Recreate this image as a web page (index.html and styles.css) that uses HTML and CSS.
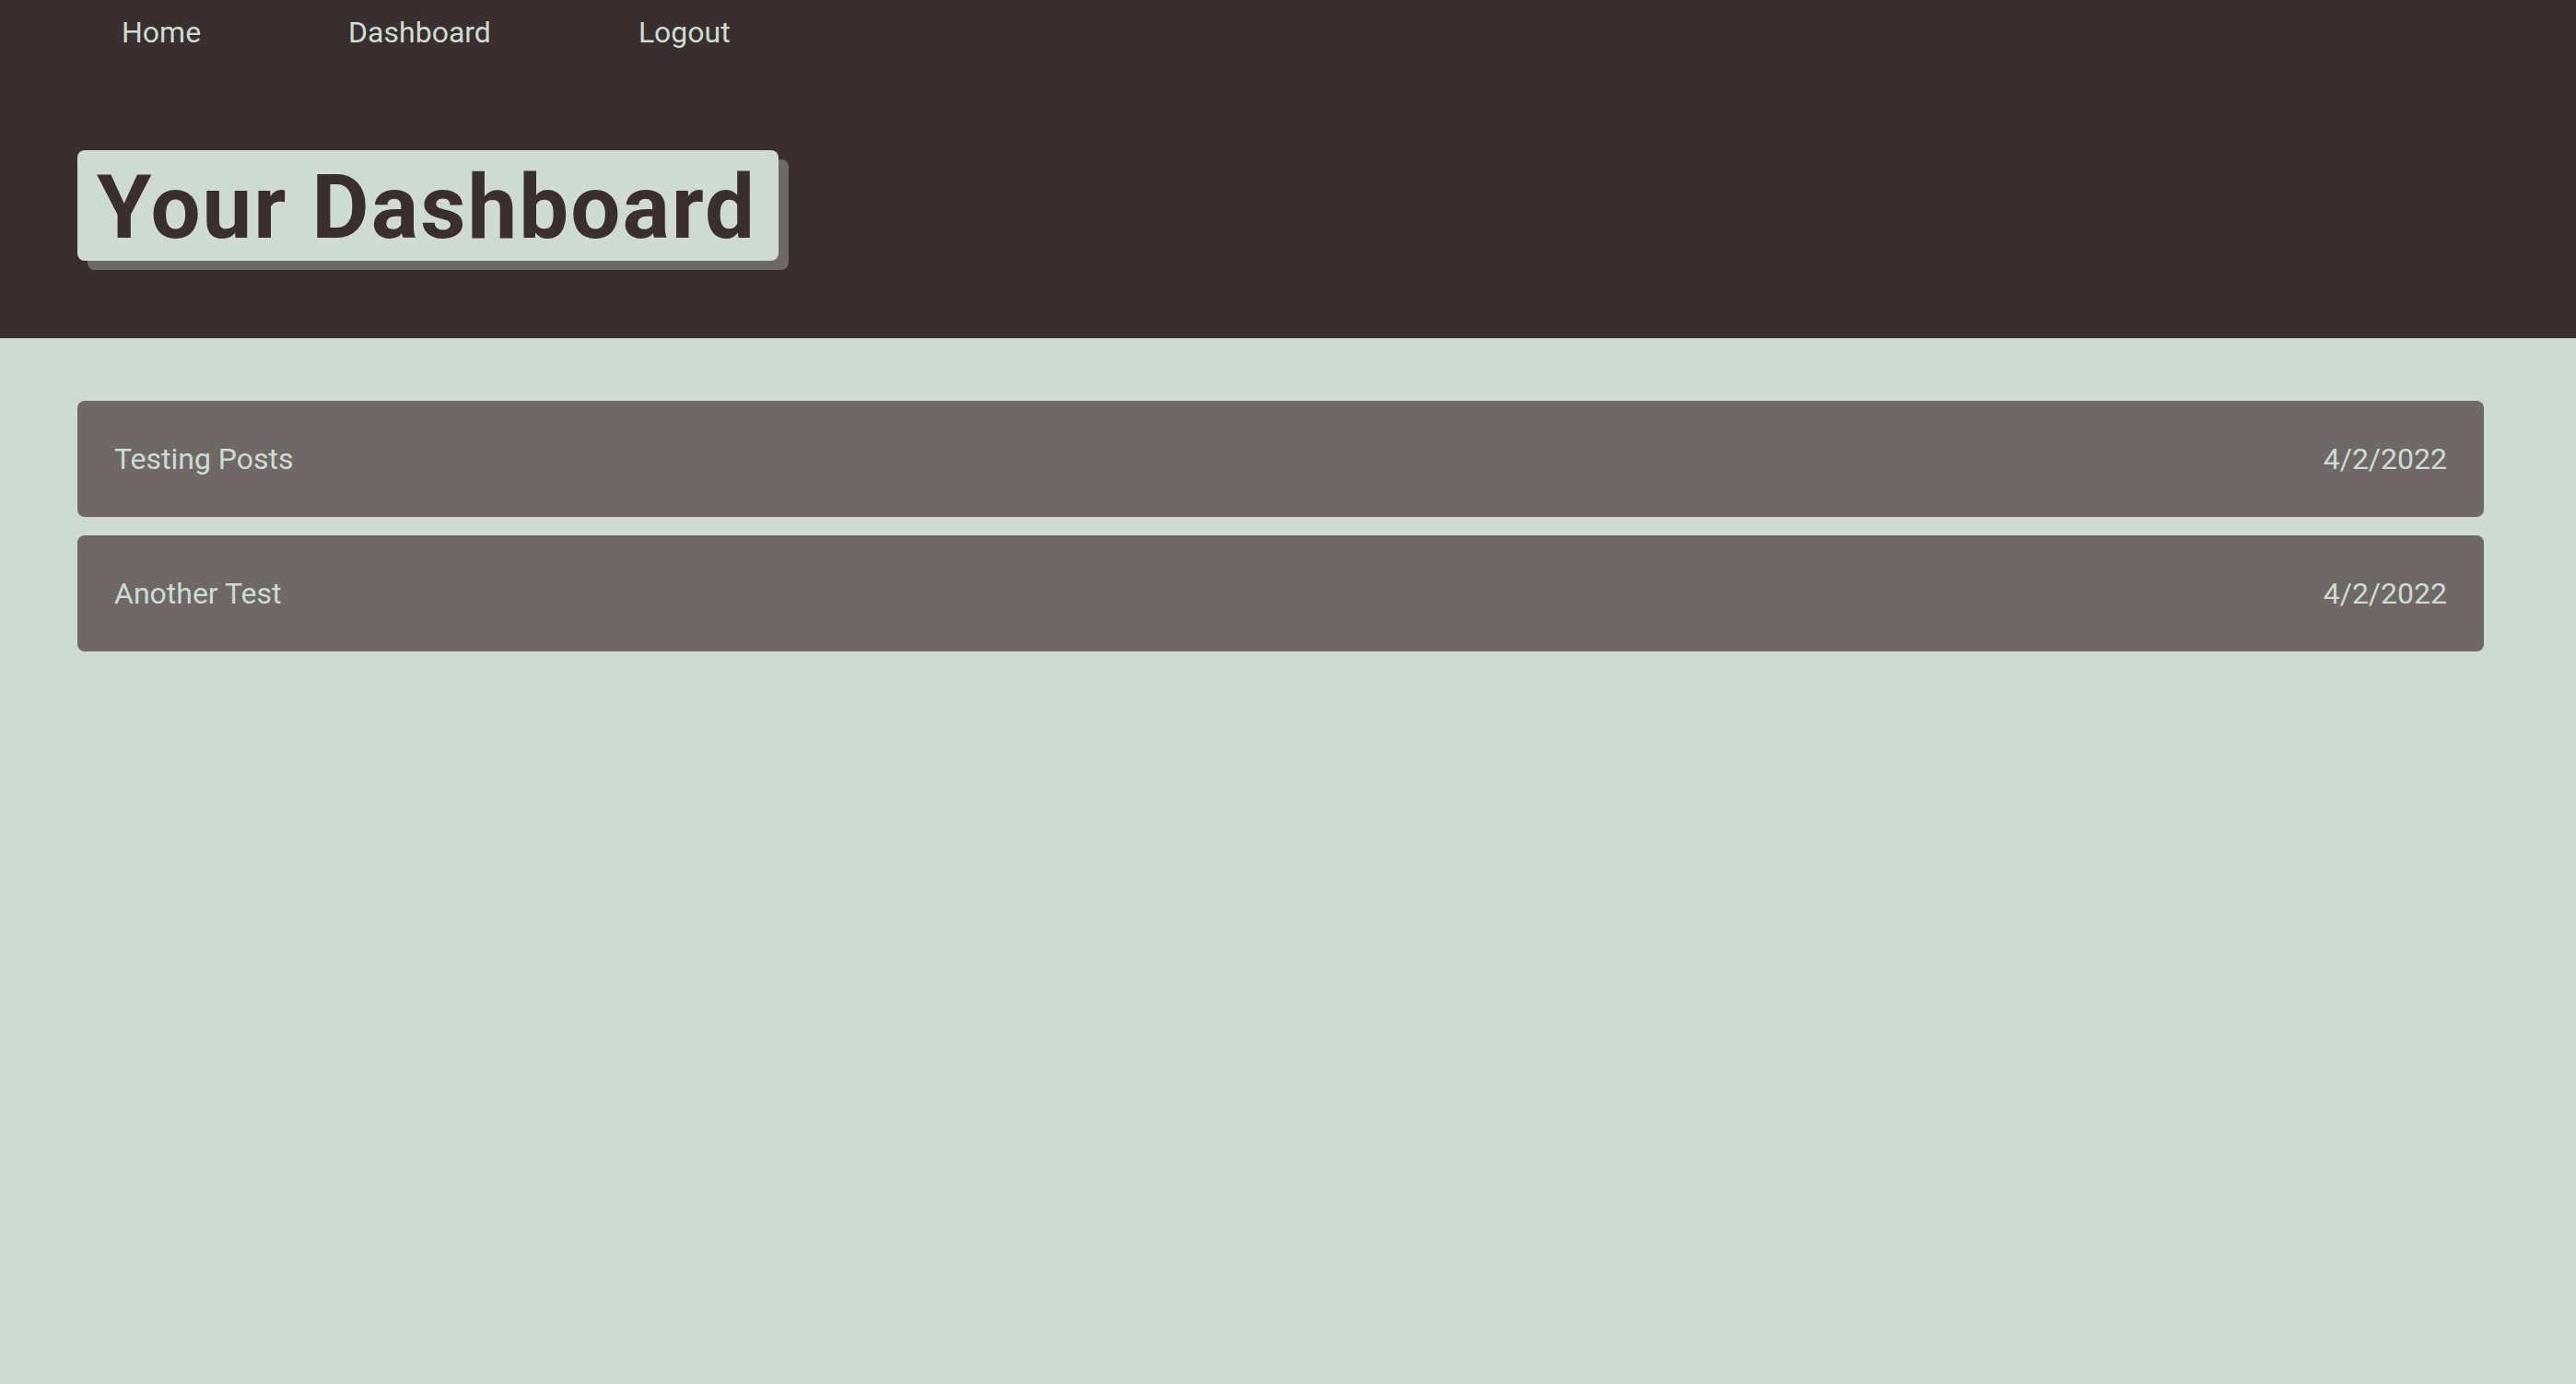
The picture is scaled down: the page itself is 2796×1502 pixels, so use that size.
FILE: index.html
```html
<!DOCTYPE html>
<html lang="en">
<head>
<meta charset="utf-8">
<title>Your Dashboard</title>
<link rel="stylesheet" href="styles.css">
</head>
<body>
<header class="site-header">
  <nav class="nav">
    <a class="nav-link" href="#">Home</a>
    <a class="nav-link" href="#">Dashboard</a>
    <a class="nav-link" href="#">Logout</a>
  </nav>
  <h1 class="page-title">Your Dashboard</h1>
</header>
<main class="posts">
  <a class="post" href="#"><span class="post-title">Testing Posts</span><span class="post-date">4/2/2022</span></a>
  <a class="post" href="#"><span class="post-title">Another Test</span><span class="post-date">4/2/2022</span></a>
</main>
</body>
</html>
```
FILE: styles.css
```css
html {
  background: #cfdbd2;
}
html, body {
  margin: 0;
  padding: 0;
}
body {
  font-family: "Roboto", "Noto Sans", sans-serif;
}
.site-header {
  background: #392f2e;
  height: 367px;
  box-sizing: border-box;
  padding: 11px 0 0 84px;
}
.nav {
  display: flex;
  gap: 160px;
  padding-left: 48px;
  line-height: 48px;
}
.nav-link {
  color: #cfdbd2;
  text-decoration: none;
  font-size: 32px;
}
.page-title {
  display: inline-block;
  margin: 104px 0 0 0;
  background: #cfdbd2;
  color: #392f2e;
  font-family: "Roboto", "Liberation Sans", sans-serif;
  font-weight: 700;
  font-size: 96px;
  letter-spacing: 2px;
  line-height: 116px;
  padding: 4px 24px 0 21px;
  border-radius: 8px;
  box-shadow: 11px 10px 0 #6e6966;
}
.posts {
  display: flex;
  flex-direction: column;
  gap: 20px;
  padding: 68px 100px 0 84px;
}
.post {
  display: flex;
  justify-content: space-between;
  align-items: center;
  background: #6e6966;
  color: #cfdbd2;
  text-decoration: none;
  font-size: 32px;
  line-height: 46px;
  padding: 40px;
  border-radius: 8px;
}
```
